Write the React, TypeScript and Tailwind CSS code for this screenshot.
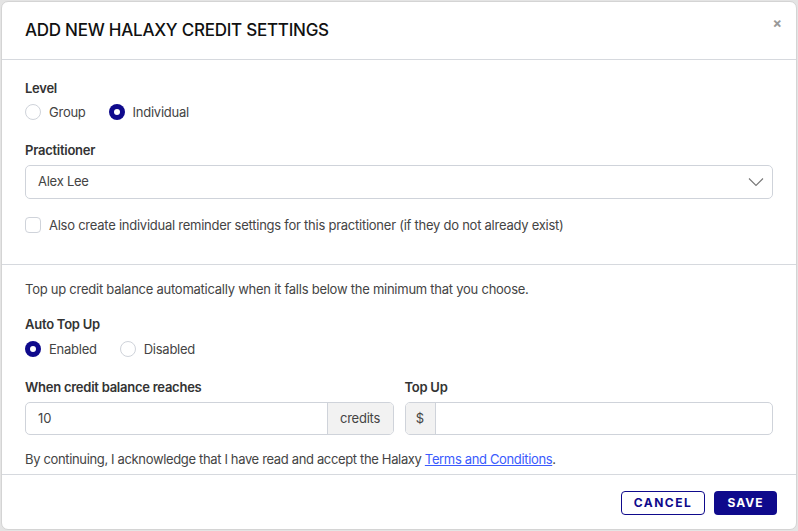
import React from "react";

function Radio({ checked, label }: { checked: boolean; label: string }) {
  return (
    <label className="flex items-center gap-[8px]">
      {checked ? (
        <span className="flex h-[16px] w-[16px] items-center justify-center rounded-full bg-[#0f0a8c]">
          <span className="h-[6px] w-[6px] rounded-full bg-white" />
        </span>
      ) : (
        <span className="h-[16px] w-[16px] rounded-full border border-[#cfd3da] bg-white" />
      )}
      <span className="text-[13px] leading-[16px] tracking-[-0.25px] text-[#444]">{label}</span>
    </label>
  );
}

export default function App() {
  return (
    <div
      className="h-[531px] w-[798px] bg-[#e4e4e4] p-px"
      style={{ fontFamily: "Inter, 'Noto Sans', sans-serif" }}
    >
      <div className="flex h-[529px] w-[796px] flex-col overflow-hidden rounded-[7px] border border-[#d4d4d4] bg-white">
        <div className="relative flex h-[58px] items-center border-b border-[#d6d9de] px-[23px]">
          <h1 className="text-[17px] font-medium tracking-[-0.25px] text-[#111]">ADD NEW HALAXY CREDIT SETTINGS</h1>
          <span className="absolute right-[14px] top-[11px] text-[14px] font-bold leading-[20px] text-[#999]">×</span>
        </div>

        <div className="border-b border-[#d6d9de] px-[23px] pb-[31px] pt-[19px]">
          <div className="text-[13px] font-semibold leading-[18px] tracking-[-0.25px] text-[#333]">Level</div>
          <div className="mt-[7px] flex items-center gap-[23px]">
            <Radio checked={false} label="Group" />
            <Radio checked label="Individual" />
          </div>
          <div className="mt-[21px] text-[13px] font-semibold leading-[18px] tracking-[-0.25px] text-[#333]">Practitioner</div>
          <div className="mt-[6px] flex h-[34px] items-center justify-between rounded-[5px] border border-[#cfd3da] pl-[12px] pr-[8px]">
            <span className="text-[13px] tracking-[-0.25px] text-[#444]">Alex Lee</span>
            <svg width="16" height="10" viewBox="0 0 16 10" fill="none">
              <path d="M1 1.5 L8 8.5 L15 1.5" stroke="#777" strokeWidth="1.1" />
            </svg>
          </div>
          <div className="mt-[18px] flex items-center gap-[8px]">
            <span className="h-[16px] w-[16px] rounded-[4px] border border-[#cfd3da]" />
            <span className="text-[13px] leading-[16px] tracking-[-0.25px] text-[#444]">
              Also create individual reminder settings for this practitioner (if they do not already exist)
            </span>
          </div>
        </div>

        <div className="border-b border-[#d6d9de] px-[23px] pb-[6px] pt-[15px]">
          <div className="text-[13px] leading-[18px] tracking-[-0.25px] text-[#444]">
            Top up credit balance automatically when it falls below the minimum that you choose.
          </div>
          <div className="mt-[17px] text-[13px] font-semibold leading-[18px] tracking-[-0.25px] text-[#333]">Auto Top Up</div>
          <div className="mt-[8px] flex items-center gap-[23px]">
            <Radio checked label="Enabled" />
            <Radio checked={false} label="Disabled" />
          </div>
          <div className="mt-[21px] grid grid-cols-2 gap-[11px]">
            <div>
              <div className="text-[13px] font-semibold leading-[18px] tracking-[-0.25px] text-[#333]">When credit balance reaches</div>
              <div className="mt-[6px] flex h-[33px] overflow-hidden rounded-[5px] border border-[#cfd3da]">
                <div className="flex flex-1 items-center pl-[12px] text-[13px] text-[#444]">10</div>
                <div className="flex w-[66px] items-center justify-center border-l border-[#cfd3da] bg-[#f2f2f2] text-[13px] tracking-[-0.25px] text-[#444]">
                  credits
                </div>
              </div>
            </div>
            <div>
              <div className="text-[13px] font-semibold leading-[18px] tracking-[-0.25px] text-[#333]">Top Up</div>
              <div className="mt-[6px] flex h-[33px] overflow-hidden rounded-[5px] border border-[#cfd3da]">
                <div className="flex w-[30px] items-center justify-center border-r border-[#cfd3da] bg-[#f2f2f2] text-[13px] text-[#444]">
                  $
                </div>
                <div className="flex-1" />
              </div>
            </div>
          </div>
          <div className="mt-[15px] text-[13px] leading-[18px] tracking-[-0.35px] text-[#444]">
            By continuing, I acknowledge that I have read and accept the Halaxy{" "}
            <span className="text-[#3b5bfd] underline">Terms and Conditions</span>.
          </div>
        </div>

        <div className="flex justify-end gap-[9px] pr-[19px] pt-[16px]">
          <button className="flex h-[24px] w-[84px] items-center justify-center rounded-[4px] border border-[#0f0a8c] text-[12px] font-bold tracking-[1.5px] text-[#0f0a8c]">
            CANCEL
          </button>
          <button className="flex h-[24px] w-[63px] items-center justify-center rounded-[4px] bg-[#0f0a8c] text-[12px] font-bold tracking-[1px] text-white">
            SAVE
          </button>
        </div>
      </div>
    </div>
  );
}
